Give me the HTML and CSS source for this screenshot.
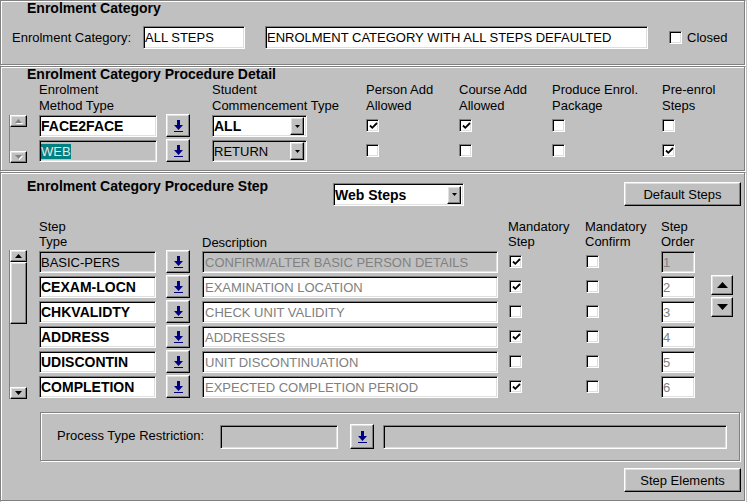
FILE: index.html
```html
<!DOCTYPE html>
<html lang="en">
<head>
    <meta charset="UTF-8">
    <title>Enrolment Category</title>
    <link rel="stylesheet" href="styles.css">
</head>
<body>

<section class="group cat">
    <h2 class="group-title">Enrolment Category</h2>
    <div class="cat-row">
        <span class="cat-label">Enrolment Category:</span>
        <span class="field cat-code">ALL STEPS</span>
        <span class="field cat-desc">ENROLMENT CATEGORY WITH ALL STEPS DEFAULTED</span>
        <span class="check"></span>
        <span class="check-label">Closed</span>
    </div>
</section>

<section class="group detail">
    <h2 class="group-title">Enrolment Category Procedure Detail</h2>
    <div class="body-flex">
        <div class="scroll-col detail-scroll">
            <div class="vscroll short">
                <div class="btn sbtn"><svg width="8" height="5" viewBox="0 0 8 5"><path d="M4.5 1L8 5H1z" fill="#fff"/><path d="M3.5 0L7 4H0z" fill="#808080"/></svg></div>
                <div class="track"></div>
                <div class="btn sbtn"><svg width="8" height="5" viewBox="0 0 8 5"><path d="M1 1h7L4.5 5z" fill="#fff"/><path d="M0 0h7L3.5 4z" fill="#808080"/></svg></div>
            </div>
        </div>
        <div class="rows">
            <div class="drow head">
                <div>Enrolment<br>Method Type</div>
                <div></div>
                <div>Student<br>Commencement Type</div>
                <div>Person Add<br>Allowed</div>
                <div>Course Add<br>Allowed</div>
                <div>Produce Enrol.<br>Package</div>
                <div>Pre-enrol<br>Steps</div>
            </div>
            <div class="drow">
                <div class="field b method">FACE2FACE</div>
                <div class="btn lookup"><svg width="9" height="12" viewBox="0 0 9 12"><path d="M3 0h3v5h3l-4.5 5L0 5h3z" fill="#000080"/><path d="M0 11h9v1H0z" fill="#000080"/></svg></div>
                <div class="field combo b commence"><span class="combo-text">ALL</span><span class="btn combo-btn"><svg width="5" height="3" viewBox="0 0 5 3"><path d="M0 0h5L2.5 3z"/></svg></span></div>
                <div class="check on"><svg width="9" height="8" viewBox="0 0 9 8"><path d="M1 3.5l2.3 2.3L8 1" fill="none" stroke="#000" stroke-width="1.8"/></svg></div>
                <div class="check on"><svg width="9" height="8" viewBox="0 0 9 8"><path d="M1 3.5l2.3 2.3L8 1" fill="none" stroke="#000" stroke-width="1.8"/></svg></div>
                <div class="check"></div>
                <div class="check"></div>
            </div>
            <div class="drow">
                <div class="field off method"><span class="sel">WEB</span></div>
                <div class="btn lookup"><svg width="9" height="12" viewBox="0 0 9 12"><path d="M3 0h3v5h3l-4.5 5L0 5h3z" fill="#000080"/><path d="M0 11h9v1H0z" fill="#000080"/></svg></div>
                <div class="field combo off commence"><span class="combo-text">RETURN</span><span class="btn combo-btn"><svg width="5" height="3" viewBox="0 0 5 3"><path d="M0 0h5L2.5 3z"/></svg></span></div>
                <div class="check"></div>
                <div class="check"></div>
                <div class="check"></div>
                <div class="check on"><svg width="9" height="8" viewBox="0 0 9 8"><path d="M1 3.5l2.3 2.3L8 1" fill="none" stroke="#000" stroke-width="1.8"/></svg></div>
            </div>
        </div>
    </div>
</section>

<section class="group steps">
    <div class="steps-top">
        <h2 class="group-title steps-title">Enrolment Category Procedure Step</h2>
        <div class="field combo b web"><span class="combo-text">Web Steps</span><span class="btn combo-btn"><svg width="5" height="3" viewBox="0 0 5 3"><path d="M0 0h5L2.5 3z"/></svg></span></div>
        <div class="btn push default">Default Steps</div>
    </div>

    <div class="body-flex steps-body">
        <div class="scroll-col step-scroll">
            <div class="vscroll long">
                <div class="btn sbtn"><svg width="7" height="4" viewBox="0 0 7 4"><path d="M3.5 0L7 4H0z"/></svg></div>
                <div class="btn thumb"></div>
                <div class="track"></div>
                <div class="btn sbtn"><svg width="7" height="4" viewBox="0 0 7 4"><path d="M0 0h7L3.5 4z"/></svg></div>
            </div>
        </div>
        <div class="rows">
            <div class="srow head">
                <div>Step<br>Type</div>
                <div></div>
                <div class="hd-low">Description</div>
                <div>Mandatory<br>Step</div>
                <div>Mandatory<br>Confirm</div>
                <div>Step<br>Order</div>
            </div>
            <div class="srow">
                <div class="field off step-type">BASIC-PERS</div>
                <div class="btn lookup"><svg width="9" height="12" viewBox="0 0 9 12"><path d="M3 0h3v5h3l-4.5 5L0 5h3z" fill="#000080"/><path d="M0 11h9v1H0z" fill="#000080"/></svg></div>
                <div class="field off dim step-desc">CONFIRM/ALTER BASIC PERSON DETAILS</div>
                <div class="check on"><svg width="9" height="8" viewBox="0 0 9 8"><path d="M1 3.5l2.3 2.3L8 1" fill="none" stroke="#000" stroke-width="1.8"/></svg></div>
                <div class="check confirm"></div>
                <div class="field off dim order">1</div>
            </div>
            <div class="srow">
                <div class="field b step-type">CEXAM-LOCN</div>
                <div class="btn lookup"><svg width="9" height="12" viewBox="0 0 9 12"><path d="M3 0h3v5h3l-4.5 5L0 5h3z" fill="#000080"/><path d="M0 11h9v1H0z" fill="#000080"/></svg></div>
                <div class="field dim step-desc">EXAMINATION LOCATION</div>
                <div class="check on"><svg width="9" height="8" viewBox="0 0 9 8"><path d="M1 3.5l2.3 2.3L8 1" fill="none" stroke="#000" stroke-width="1.8"/></svg></div>
                <div class="check confirm"></div>
                <div class="field dim order">2</div>
            </div>
            <div class="srow">
                <div class="field b step-type">CHKVALIDTY</div>
                <div class="btn lookup"><svg width="9" height="12" viewBox="0 0 9 12"><path d="M3 0h3v5h3l-4.5 5L0 5h3z" fill="#000080"/><path d="M0 11h9v1H0z" fill="#000080"/></svg></div>
                <div class="field dim step-desc">CHECK UNIT VALIDITY</div>
                <div class="check"></div>
                <div class="check confirm"></div>
                <div class="field dim order">3</div>
            </div>
            <div class="srow">
                <div class="field b step-type">ADDRESS</div>
                <div class="btn lookup"><svg width="9" height="12" viewBox="0 0 9 12"><path d="M3 0h3v5h3l-4.5 5L0 5h3z" fill="#000080"/><path d="M0 11h9v1H0z" fill="#000080"/></svg></div>
                <div class="field dim step-desc">ADDRESSES</div>
                <div class="check on"><svg width="9" height="8" viewBox="0 0 9 8"><path d="M1 3.5l2.3 2.3L8 1" fill="none" stroke="#000" stroke-width="1.8"/></svg></div>
                <div class="check confirm"></div>
                <div class="field dim order">4</div>
            </div>
            <div class="srow">
                <div class="field b step-type">UDISCONTIN</div>
                <div class="btn lookup"><svg width="9" height="12" viewBox="0 0 9 12"><path d="M3 0h3v5h3l-4.5 5L0 5h3z" fill="#000080"/><path d="M0 11h9v1H0z" fill="#000080"/></svg></div>
                <div class="field dim step-desc">UNIT DISCONTINUATION</div>
                <div class="check"></div>
                <div class="check confirm"></div>
                <div class="field dim order">5</div>
            </div>
            <div class="srow">
                <div class="field b step-type">COMPLETION</div>
                <div class="btn lookup"><svg width="9" height="12" viewBox="0 0 9 12"><path d="M3 0h3v5h3l-4.5 5L0 5h3z" fill="#000080"/><path d="M0 11h9v1H0z" fill="#000080"/></svg></div>
                <div class="field dim step-desc">EXPECTED COMPLETION PERIOD</div>
                <div class="check on"><svg width="9" height="8" viewBox="0 0 9 8"><path d="M1 3.5l2.3 2.3L8 1" fill="none" stroke="#000" stroke-width="1.8"/></svg></div>
                <div class="check confirm"></div>
                <div class="field dim order">6</div>
            </div>
        </div>
        <div class="order-col">
            <div class="btn move"><svg width="11" height="6" viewBox="0 0 11 6"><path d="M5.5 0L11 6H0z"/></svg></div>
            <div class="btn move"><svg width="11" height="6" viewBox="0 0 11 6"><path d="M0 0h11L5.5 6z"/></svg></div>
        </div>
    </div>

    <div class="restrict">
        <span class="restrict-label">Process Type Restriction:</span>
        <span class="field off restrict-code"></span>
        <span class="btn lookup restrict-btn"><svg width="9" height="12" viewBox="0 0 9 12"><path d="M3 0h3v5h3l-4.5 5L0 5h3z" fill="#000080"/><path d="M0 11h9v1H0z" fill="#000080"/></svg></span>
        <span class="field off restrict-desc"></span>
    </div>

    <div class="foot">
        <div class="btn push">Step Elements</div>
    </div>
</section>

</body>
</html>
```

FILE: styles.css
```css
* {
    box-sizing: border-box;
}
body {
    margin: 0;
    width: 747px;
    height: 502px;
    overflow: hidden;
    background-color: #c0c0c0;
    font-family: "Liberation Sans", Arial, sans-serif;
    font-size: 13px;
    color: #000;
}

/* group boxes */
.group {
    width: 745px;
    border: 1px solid #808080;
    box-shadow: inset 1px 1px 0 #fff, 1px 1px 0 #fff;
    margin-bottom: 1px;
}
.group-title {
    margin: 0;
    padding-left: 26px;
    font-size: 14px;
    font-weight: bold;
    line-height: 15px;
}
.cat {
    height: 65px;
}
.detail {
    height: 105px;
}
.steps {
    height: 329px;
}

/* win95 widgets */
.field {
    display: flex;
    align-items: center;
    height: 22px;
    padding: 0 1px;
    background-color: #fff;
    border: 1px solid;
    border-color: #808080 #fff #fff #808080;
    box-shadow: inset 1px 1px 0 #000, inset -1px -1px 0 #dfdfdf;
    white-space: nowrap;
    overflow: hidden;
}
.field.off {
    background-color: #c0c0c0;
}
.field.b {
    font-size: 14px;
    font-weight: bold;
}
.field.dim {
    color: #808080;
}
.btn {
    display: flex;
    align-items: center;
    justify-content: center;
    background-color: #c0c0c0;
    border: 1px solid;
    border-color: #fff #000 #000 #fff;
    box-shadow: inset -1px -1px 0 #808080, inset 1px 1px 0 #dfdfdf;
}
.lookup {
    width: 24px;
    height: 23px;
}
.lookup svg {
    margin-top: 1px;
}
.push {
    width: 117px;
    height: 24px;
}
.check {
    display: flex;
    align-items: center;
    justify-content: center;
    width: 13px;
    height: 13px;
    background-color: #fff;
    border: 1px solid;
    border-color: #808080 #fff #fff #808080;
    box-shadow: inset 1px 1px 0 #000, inset -1px -1px 0 #dfdfdf;
}
.check svg {
    margin: 1px 0 0 1px;
}
.combo {
    padding-right: 2px;
}
.combo-text {
    flex: 1;
}
.combo-btn {
    width: 14px;
    height: 18px;
}
.sel {
    background-color: #008080;
    color: #e8e8e8;
}

/* scrollbars */
.vscroll {
    display: flex;
    flex-direction: column;
    width: 18px;
    border-left: 1px solid #808080;
}
.vscroll.short {
    height: 48px;
}
.vscroll.long {
    height: 149px;
}
.sbtn {
    height: 12px;
}
.thumb {
    height: 62px;
}
.track {
    flex: 1;
}

/* enrolment category */
.cat-row {
    display: flex;
    align-items: center;
    margin-top: 10px;
    padding-left: 11px;
}
.cat-label {
    width: 131px;
}
.cat-code {
    width: 102px;
    height: 23px;
    margin-right: 20px;
}
.cat-desc {
    width: 383px;
    height: 23px;
    margin-right: 21px;
}
.check-label {
    margin-left: 5px;
}

/* shared row layout */
.body-flex {
    display: flex;
    padding-left: 8px;
}
.scroll-col {
    width: 30px;
}
.detail-scroll {
    padding-top: 33px;
}
.step-scroll {
    padding-top: 31px;
}
.head {
    line-height: 16px;
}

/* procedure detail */
.drow {
    display: grid;
    grid-template-columns: 127px 46px 154px 93px 93px 110px 1fr;
    align-items: start;
    height: 24px;
}
.drow.head {
    height: 32px;
}
.drow + .drow {
    margin-top: 1px;
}
.drow.head + .drow {
    margin-top: 0;
}
.drow .field {
    margin-top: 1px;
}
.drow .check {
    margin-top: 5px;
}
.method {
    width: 118px;
}
.commence {
    width: 95px;
}

/* procedure steps */
.steps-top {
    display: flex;
    align-items: flex-start;
    margin-top: 5px;
    padding-right: 3px;
}
.steps-title {
    width: 332px;
    line-height: 16px;
}
.web {
    width: 131px;
    height: 23px;
    margin-top: 5px;
}
.default {
    margin-left: auto;
    margin-top: 4px;
}
.steps-body {
    margin-top: 13px;
}
.srow {
    display: grid;
    grid-template-columns: 127px 36px 306px 77px 76px 50px;
    align-items: start;
    height: 25px;
}
.srow.head {
    height: 31px;
    line-height: 15px;
}
.hd-low {
    align-self: end;
}
.srow .field {
    margin-top: 1px;
}
.srow .check {
    margin-top: 5px;
    margin-left: 1px;
}
.srow .check.confirm {
    margin-left: 1px;
}
.step-type {
    width: 117px;
}
.step-desc {
    width: 296px;
    padding-left: 2px;
}
.order {
    width: 34px;
}
.order-col {
    display: flex;
    flex-direction: column;
    gap: 2px;
    padding-top: 56px;
}
.move {
    width: 22px;
    height: 20px;
}

/* process type restriction */
.restrict {
    display: flex;
    align-items: center;
    width: 700px;
    height: 49px;
    margin: 12px 0 0 39px;
    padding-left: 16px;
    border: 1px solid #808080;
    box-shadow: inset 1px 1px 0 #fff, 1px 1px 0 #fff;
}
.restrict-label {
    width: 163px;
    margin-top: -3px;
}
.restrict-code {
    width: 118px;
    height: 24px;
}
.restrict-btn {
    width: 24px;
    height: 25px;
    margin-left: 12px;
}
.restrict-desc {
    width: 344px;
    height: 24px;
    margin-left: 9px;
}
.foot {
    display: flex;
    justify-content: flex-end;
    margin-top: 7px;
    padding-right: 3px;
}
```
